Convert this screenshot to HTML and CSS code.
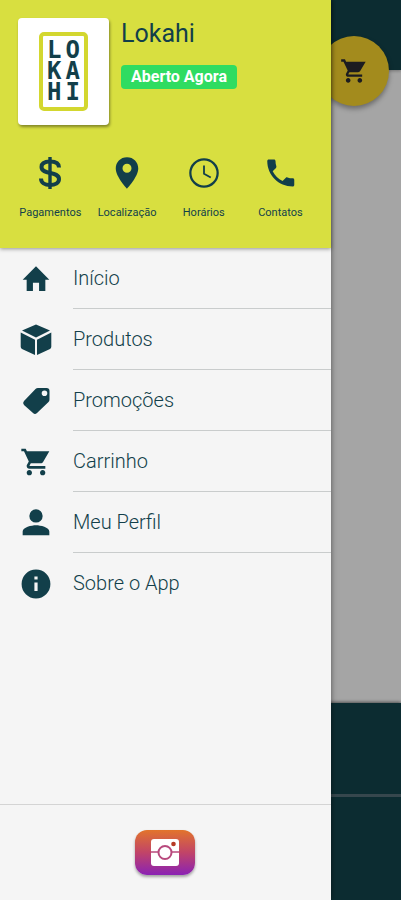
FILE: index.html
```html
<!DOCTYPE html>
<html lang="pt-BR">
<head>
<meta charset="utf-8">
<meta name="viewport" content="width=device-width, initial-scale=1">
<title>Lokahi</title>
<link rel="stylesheet" href="styles.css">
</head>
<body>
<svg class="defs" aria-hidden="true">
  <symbol id="cart" viewBox="0 0 24 24"><path d="M7 18c-1.1 0-1.99.9-1.99 2S5.900 22 7 22s2-.9 2-2-.9-2-2-2zM1 2v2h2l3.600 7.590-1.350 2.450c-.16.28-.25.61-.25.960 0 1.100.9 2 2 2h12v-2H7.420c-.14 0-.25-.11-.25-.25l.030-.12.900-1.630h7.450c.75 0 1.410-.41 1.750-1.030L22 4H5.210l-.94-2H1zm16 16c-1.100 0-1.990.9-1.990 2s.89 2 1.990 2 2-.9 2-2-.9-2-2-2z"/></symbol>
</svg>
<div class="page">
  <div class="page-top"></div>
  <main class="page-body"></main>
  <div class="page-tabs"><div class="tab-row"></div><div class="tab-row"></div></div>
  <button class="fab" aria-label="Carrinho"><svg><use href="#cart"/></svg></button>
</div>

<aside class="drawer">
  <header class="head">
    <div class="brand">
      <div class="logo">
        <div class="logo-frame">
          <div class="logo-row"><span>L</span><span>O</span></div>
          <div class="logo-row"><span>K</span><span>A</span></div>
          <div class="logo-row"><span>H</span><span>I</span></div>
        </div>
      </div>
      <div class="brand-info">
        <h1>Lokahi</h1>
        <span class="status">Aberto Agora</span>
      </div>
    </div>
    <div class="shortcuts">
      <a href="#"><svg viewBox="0 0 36 36"><path d="M27 12.500C27 8.500 23.500 6.500 18 6.500s-8.500 2-8.500 5.500c0 8 17.500 4 17.500 12 0 4-4 6-9 6s-9-2.300-9-6.500" fill="none" stroke="currentColor" stroke-width="4"/><path d="M16.300 2h3.400v32h-3.400z"/></svg>Pagamentos</a>
      <a href="#"><svg viewBox="0 0 24 24"><path d="M12 1.500C7.600 1.500 4.500 4.800 4.500 9 4.500 14.500 12 22.500 12 22.500s7.500-8 7.500-13.500C19.500 4.800 16.400 1.500 12 1.500zm0 10.300a3 3 0 1 1 0-6 3 3 0 0 1 0 6z"/></svg>Localização</a>
      <a href="#"><svg viewBox="0 0 24 24"><circle cx="12" cy="12" r="9.100" fill="none" stroke="currentColor" stroke-width="1.500"/><path d="M12 7v5.500l4.500 2.500" fill="none" stroke="currentColor" stroke-width="1.200"/></svg>Horários</a>
      <a href="#"><svg viewBox="0 0 24 24"><path d="M7.120 10.790c1.440 2.830 3.760 5.140 6.590 6.590l2.200-2.200c.27-.27.67-.36 1.020-.24 1.120.37 2.330.57 3.570.57.55 0 1 .45 1 1V20c0 .55-.45 1-1 1C11.110 21 3.500 13.390 3.500 4c0-.55.45-1 1-1H8c.55 0 1 .45 1 1 0 1.250.2 2.450.57 3.570.11.35.03.74-.25 1.020l-2.200 2.200z"/></svg>Contatos</a>
    </div>
  </header>

  <nav class="menu">
    <a href="#"><svg viewBox="0 0 24 24"><path d="M9.700 21v-6.200h4.600V21h4.700v-8.500h3L12 2.500l-10 10h3V21z"/></svg><span>Início</span></a>
    <a href="#"><svg viewBox="0 0 32 32"><path d="M16 .5 30 6.500 16 13.500 2 6.500zM.7 8.500 15 15.700V31L2 25Q.7 24.300.7 22.700zM31.300 8.500 17 15.700V31l13-6q1.300-.7 1.300-2.300z"/></svg><span>Produtos</span></a>
    <a href="#"><svg viewBox="0 0 32 32"><path fill-rule="evenodd" d="M18 3h8.500q3 0 3 3v8.500q0 1.500-1 2.500L17 28q-2 1.800-4 0L4 20q-1.800-2 0-4L15.500 4Q16.500 3 18 3zm6.500 2.500a2.800 2.800 0 1 0 0 5.600 2.800 2.800 0 0 0 0-5.600z"/></svg><span>Promoções</span></a>
    <a href="#"><svg><use href="#cart"/></svg><span>Carrinho</span></a>
    <a href="#"><svg viewBox="0 0 24 24"><path d="M12 11.700a5 5 0 1 0 0-10 5 5 0 0 0 0 10zM12 13.700c-3.300 0-10 1.500-10 4.700v2.800h20v-2.800c0-3.200-6.700-4.700-10-4.700z"/></svg><span>Meu Perfil</span></a>
    <a href="#"><svg viewBox="0 0 24 24"><path d="M12 1.200a10.800 10.800 0 1 0 0 21.600 10.800 10.800 0 0 0 0-21.600zm1.200 16h-2.400v-6.400h2.400v6.400zm0-8.500h-2.400V6.300h2.400v2.400z"/></svg><span>Sobre o App</span></a>
  </nav>

  <footer class="social">
    <a href="#" aria-label="Instagram">
      <svg viewBox="0 0 28 28"><rect width="28" height="27" rx="3" fill="#fff"/><path d="M0 13h28" stroke="#b8497d" stroke-width="1.500"/><circle cx="14" cy="13.500" r="6.500" fill="#fff" stroke="#b8497d" stroke-width="2"/><circle cx="22.500" cy="5" r="2.300" fill="#b63a24"/></svg>
    </a>
  </footer>
</aside>
</body>
</html>
```
FILE: styles.css
```css
* { box-sizing: border-box; }
body {
  margin: 0;
  font-family: Roboto, "Liberation Sans", sans-serif;
  color: #123f4a;
}
a { color: inherit; text-decoration: none; }
svg { fill: currentColor; display: block; }
.defs { position: absolute; width: 0; height: 0; }

.page {
  position: relative;
  display: flex;
  flex-direction: column;
  min-height: 100vh;
  background: #a5a5a5;
  overflow: hidden;
}
.page-top { height: 70px; background: #0c2c31; box-shadow: 0 1px 3px rgba(0, 0, 0, .3); }
.page-body { flex: 1; }
.page-tabs { background: #0c2c31; box-shadow: 0 -1px 3px rgba(0, 0, 0, .5); }
.tab-row { height: 91px; }
.tab-row + .tab-row { height: 106px; border-top: 3px solid #36474d; }
.fab {
  position: absolute;
  top: 36px;
  right: 12px;
  width: 70px;
  height: 70px;
  padding: 0;
  display: grid;
  place-items: center;
  border: 0;
  border-radius: 50%;
  background: #a38b1d;
  color: #1c1c20;
  box-shadow: 0 3px 5px rgba(0, 0, 0, .35);
}
.fab svg { width: 28px; height: 28px; }

.drawer {
  position: absolute;
  inset: 0 auto 0 0;
  width: 82.5%;
  min-height: 100vh;
  display: flex;
  flex-direction: column;
  background: #f5f5f5;
  box-shadow: 0 0 6px rgba(0, 0, 0, .5);
}
.head {
  height: 248px;
  padding: 18px 12px 0;
  background: #d8df40;
  box-shadow: 0 1px 4px rgba(0, 0, 0, .4);
}
.brand { display: flex; gap: 12px; padding-left: 6px; }
.logo {
  width: 91px;
  height: 107px;
  display: grid;
  place-items: center;
  border-radius: 4px;
  background: #fff;
  box-shadow: 1px 2px 3px rgba(0, 0, 0, .4);
}
.logo-frame {
  width: 49px;
  height: 79px;
  display: flex;
  flex-direction: column;
  justify-content: center;
  border: 4px solid #d3d72f;
  border-radius: 5px;
  font: bold 24px/21px "DejaVu Sans Mono", monospace;
}
.logo-row { display: flex; justify-content: center; gap: 4px; }
h1 { margin: 0; font-size: 25px; line-height: 31px; font-weight: 400; }
.status {
  display: block;
  margin-top: 16px;
  padding: 0 10px;
  border-radius: 4px;
  background: #2fdc61;
  color: #fff;
  font-size: 16px;
  line-height: 24px;
  font-weight: 700;
}
.shortcuts {
  display: grid;
  grid-template-columns: repeat(4, 1fr);
  margin-top: 30px;
}
.shortcuts a {
  display: flex;
  flex-direction: column;
  align-items: center;
  gap: 14px;
  font-size: 11px;
  line-height: 16px;
}
.shortcuts svg { width: 36px; height: 36px; }

.menu { flex: 1; }
.menu a {
  display: flex;
  height: 61px;
  padding-left: 20px;
  align-items: center;
  gap: 21px;
  font-size: 20px;
  font-weight: 300;
}
.menu svg { width: 32px; height: 32px; }
.menu span {
  flex: 1;
  line-height: 60px;
  border-bottom: 1px solid #c9cccc;
}
.menu a:last-child span { border-bottom-color: transparent; }

.social {
  height: 96px;
  display: grid;
  place-items: center;
  border-top: 1px solid #d4d4d4;
}
.social a {
  width: 60px;
  height: 45px;
  display: grid;
  place-items: center;
  border-radius: 12px;
  background: linear-gradient(#e2742c, #c14468 50%, #8a22b4);
  box-shadow: 0 2px 3px rgba(0, 0, 0, .35);
}
.social svg { width: 28px; height: 28px; }
```
